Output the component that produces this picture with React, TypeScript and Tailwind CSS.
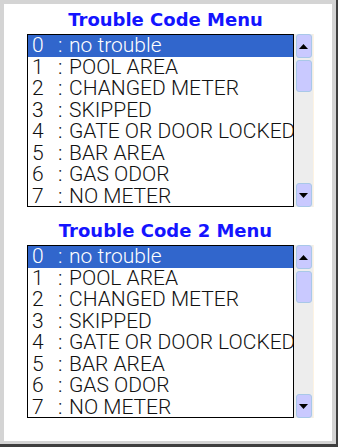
import { useState } from 'react';

const items = [
  'no trouble',
  'POOL AREA',
  'CHANGED METER',
  'SKIPPED',
  'GATE OR DOOR LOCKED',
  'BAR AREA',
  'GAS ODOR',
  'NO METER',
];

function ScrollButton({ down }: { down?: boolean }) {
  return (
    <div className="h-[24px] w-[16px] rounded-[3px] border border-[#a9c8e8] bg-[#c9c9ff] flex items-center justify-center">
      <svg width="9" height="5" viewBox="0 0 9 5">
        {down ? <path d="M0 0h9L4.5 5z" fill="#000" /> : <path d="M0 5h9L4.5 0z" fill="#000" />}
      </svg>
    </div>
  );
}

function CodeMenu({ title }: { title: string }) {
  const [selected, setSelected] = useState(0);

  return (
    <div className="flex flex-col w-[287px]">
      <h2 className="text-center text-[18px] leading-[24px] font-bold text-[#1414ff] pr-[10px] font-['DejaVu_Sans',sans-serif]">
        {title}
      </h2>
      <div className="flex h-[173px] mt-[2px]">
        <ul className="w-[267px] border border-black overflow-hidden bg-white font-['Roboto',sans-serif] font-light">
          {items.map((label, i) => (
            <li
              key={i}
              onClick={() => setSelected(i)}
              className={
                'flex items-center h-[21.5px] text-[21px] leading-[21.5px] whitespace-nowrap ' +
                (i === selected ? 'bg-[#3166cc] text-white' : 'text-[#111]')
              }
            >
              <span className="w-[30px] shrink-0 pl-[4px]">{i}</span>
              <span className="w-[11px] shrink-0">:</span>
              <span className="shrink-0">{label}</span>
            </li>
          ))}
        </ul>
        <div className="w-[20px] flex flex-col items-center justify-between bg-[#ededed] border-r border-[#fdf3e3] px-[1px]">
          <div className="flex flex-col gap-[2px]">
            <ScrollButton />
            <div className="h-[32px] w-[16px] rounded-[3px] border border-[#a9c8e8] bg-[#c9c9ff]" />
          </div>
          <ScrollButton down />
        </div>
      </div>
    </div>
  );
}

export default function App() {
  return (
    <div className="w-[338px] h-[447px] bg-[#3f3f3f] pr-[2px] pb-[3px]">
      <div className="h-full bg-[#d4d4d4] pt-[4px] pl-[4px] pr-[4px] pb-[3px]">
        <div className="h-full bg-white pl-[23px] pt-[4px] flex flex-col gap-[12px]">
          <CodeMenu title="Trouble Code Menu" />
          <CodeMenu title="Trouble Code 2 Menu" />
        </div>
      </div>
    </div>
  );
}
